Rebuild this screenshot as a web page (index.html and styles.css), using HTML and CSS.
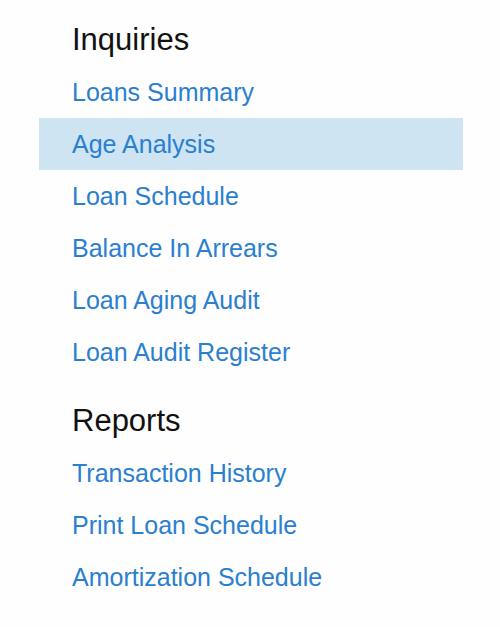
FILE: index.html
```html
<!DOCTYPE html>
<html lang="en">
<head>
<meta charset="utf-8">
<title>Loans Menu</title>
<link rel="stylesheet" href="styles.css">
</head>
<body>
<nav class="menu">
  <section class="group">
    <h2 class="group-title">Inquiries</h2>
    <ul class="items">
      <li><a class="item" href="#">Loans Summary</a></li>
      <li><a class="item active" href="#">Age Analysis</a></li>
      <li><a class="item" href="#">Loan Schedule</a></li>
      <li><a class="item" href="#">Balance In Arrears</a></li>
      <li><a class="item" href="#">Loan Aging Audit</a></li>
      <li><a class="item" href="#">Loan Audit Register</a></li>
    </ul>
  </section>
  <section class="group">
    <h2 class="group-title">Reports</h2>
    <ul class="items">
      <li><a class="item" href="#">Transaction History</a></li>
      <li><a class="item" href="#">Print Loan Schedule</a></li>
      <li><a class="item" href="#">Amortization Schedule</a></li>
    </ul>
  </section>
</nav>
</body>
</html>
```
FILE: styles.css
```css
html, body {
  margin: 0;
  padding: 0;
  background: #fefefe;
}

body {
  font-family: "Liberation Sans", Arial, sans-serif;
}

.menu {
  display: flex;
  flex-direction: column;
  width: 424px;
  margin-left: 39px;
  padding-top: 1px;
}

.group + .group {
  margin-top: 4px;
}

.group-title {
  margin: 0;
  padding: 20px 0 7px 33px;
  font-size: 31px;
  font-weight: normal;
  line-height: 38px;
  color: #111111;
}

.items {
  list-style: none;
  margin: 0;
  padding: 0;
}

.item {
  display: block;
  height: 52px;
  line-height: 52px;
  padding-left: 33px;
  font-size: 25px;
  color: #2a7fcf;
  text-decoration: none;
}

.item.active {
  background: #cee4f3;
}
```
